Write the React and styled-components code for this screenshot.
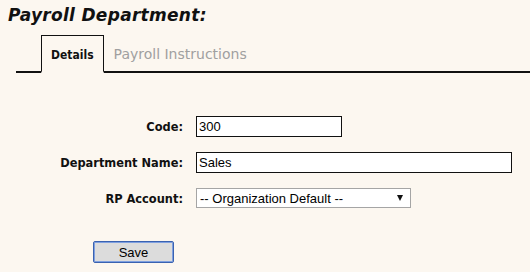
import React, { useState } from "react";
import styled, { createGlobalStyle } from "styled-components";

const GlobalStyle = createGlobalStyle`
  html, body {
    margin: 0;
    padding: 0;
    background: #fcf7f0;
  }
  body {
    font-family: "DejaVu Sans", Verdana, sans-serif;
  }
`;

const Page = styled.section`
  width: 530px;
  height: 272px;
  overflow: hidden;
  background: #fcf7f0;
`;

const Title = styled.h1`
  margin: 0;
  padding: 5px 0 0 8px;
  height: 28px;
  font-family: "DejaVu Sans", Verdana, sans-serif;
  font-size: 17px;
  font-weight: bold;
  font-style: italic;
  color: #111;
  letter-spacing: 0.3px;
`;

const Tabs = styled.nav`
  display: flex;
  align-items: flex-end;
  margin-left: 16px;
  padding-left: 25px;
  border-bottom: 2px solid #111;
  height: 38px;
`;

const Tab = styled.div`
  height: ${(p) => (p.$active ? "38px" : "36px")};
  margin-bottom: ${(p) => (p.$active ? "-2px" : "0")};
  padding: 0 ${(p) => (p.$active ? "9px" : "10px")};
  display: flex;
  align-items: center;
  box-sizing: border-box;
  border: ${(p) => (p.$active ? "1px solid #111" : "none")};
  border-bottom: ${(p) => (p.$active ? "2px solid #fcf7f0" : "none")};
  font-family: ${(p) =>
    p.$active ? '"DejaVu Sans Condensed", "DejaVu Sans", sans-serif' : '"DejaVu Sans", sans-serif'};
  font-size: ${(p) => (p.$active ? "12px" : "14px")};
  font-weight: ${(p) => (p.$active ? "bold" : "normal")};
  color: ${(p) => (p.$active ? "#111" : "#a0a0a0")};
  padding-top: 2px;
`;

const Form = styled.form`
  display: grid;
  grid-template-columns: 183px auto;
  column-gap: 13px;
  row-gap: 15px;
  align-items: center;
  padding-top: 43px;
`;

const Label = styled.label`
  justify-self: end;
  font-family: "DejaVu Sans Condensed", "DejaVu Sans", sans-serif;
  font-size: 12.7px;
  font-weight: bold;
  color: #111;
`;

const TextInput = styled.input`
  width: ${(p) => p.$width}px;
  height: 21px;
  box-sizing: border-box;
  border: 1px solid #111;
  background: #fff;
  padding: 1px 2px;
  font-family: "Liberation Sans", Arial, sans-serif;
  font-size: 13px;
  color: #000;
  outline: none;
`;

const SelectBox = styled.div`
  width: 215px;
  height: 20px;
  box-sizing: border-box;
  border: 1px solid #a5a5a5;
  background: #fff;
  display: flex;
  align-items: center;
  padding-left: 3px;
  font-family: "Liberation Sans", Arial, sans-serif;
  font-size: 13px;
  color: #000;
`;

const Arrow = styled.span`
  margin-left: auto;
  margin-right: 7px;
  width: 0;
  height: 0;
  border-left: 3px solid transparent;
  border-right: 3px solid transparent;
  border-top: 6px solid #111;
`;

const Actions = styled.div`
  padding: 33px 0 0 93px;
`;

const Button = styled.button`
  width: 81px;
  height: 22px;
  border: 1px solid #3a62b0;
  box-shadow: inset 0 0 0 1px #7fa0e0;
  border-radius: 2px;
  background: #dcdcdc;
  font-family: "Liberation Sans", Arial, sans-serif;
  font-size: 13px;
  color: #000;
  cursor: pointer;
`;

const App = () => {
  const [code, setCode] = useState("300");
  const [name, setName] = useState("Sales");

  return (
    <Page>
      <GlobalStyle />
      <Title>Payroll Department:</Title>
      <Tabs>
        <Tab $active>Details</Tab>
        <Tab>Payroll Instructions</Tab>
      </Tabs>
      <Form onSubmit={(e) => e.preventDefault()}>
        <Label>Code:</Label>
        <div>
          <TextInput $width={146} value={code} onChange={(e) => setCode(e.target.value)} />
        </div>
        <Label>Department Name:</Label>
        <div>
          <TextInput $width={316} value={name} onChange={(e) => setName(e.target.value)} />
        </div>
        <Label>RP Account:</Label>
        <div>
          <SelectBox>
            -- Organization Default --
            <Arrow />
          </SelectBox>
        </div>
      </Form>
      <Actions>
        <Button type="button">Save</Button>
      </Actions>
    </Page>
  );
};

export default App;
